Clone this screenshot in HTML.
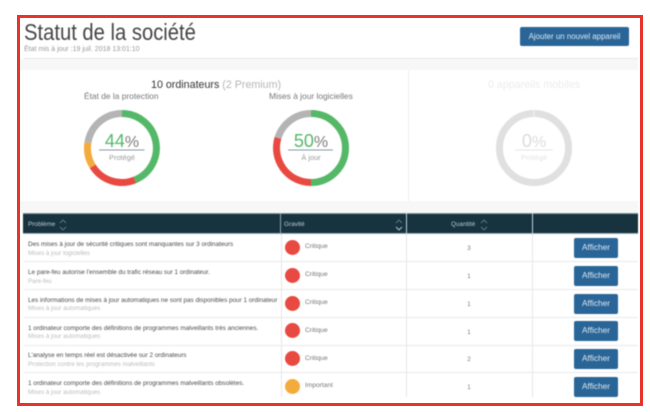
<!DOCTYPE html>
<html lang="fr">
<head>
<meta charset="utf-8">
<title>Statut de la société</title>
<style>
html,body{margin:0;padding:0;background:#fff;}
body{width:650px;height:412px;overflow:hidden;position:relative;font-family:"Liberation Sans",sans-serif;}
#w{position:absolute;left:0;top:0;width:650px;height:412px;filter:blur(0.5px);overflow:hidden;}
.a{position:absolute;white-space:nowrap;}
.band{position:absolute;background:#f7f7f7;}
.btn{position:absolute;left:574px;width:44px;height:20px;background:#2a6597;border-radius:2px;color:#dbe8f2;font-size:8.3px;line-height:19px;text-align:center;}
.sep{position:absolute;left:24px;width:614px;height:1px;background:#e9e9e9;}
.v{position:absolute;width:1px;top:234px;height:163px;background:#e6e6e6;}
.t1{position:absolute;left:28px;font-size:6.35px;color:#4a4a4a;white-space:nowrap;line-height:8px;}
.t2{position:absolute;left:28px;font-size:6.2px;color:#bcbcbc;white-space:nowrap;line-height:8px;}
.dot{position:absolute;left:285px;width:15px;height:15px;border-radius:50%;background:#e84a41;}
.g{position:absolute;left:305px;font-size:6.6px;color:#777;line-height:8px;}
.q{position:absolute;left:464px;width:10px;text-align:center;font-size:6.2px;color:#777;line-height:8px;}
.th{position:absolute;top:221px;font-size:6.4px;color:#b9c8cc;line-height:8px;white-space:nowrap;}
.c{position:absolute;text-align:center;}
</style>
</head>
<body>
<div id="w">
<div class="a" style="left:24px;top:19px;font-size:23.5px;line-height:27px;color:#454545;transform:scaleX(0.86);transform-origin:left top;">Statut de la société</div>
<div class="a" style="left:24px;top:46px;font-size:7px;line-height:8px;color:#999;">État mis à jour :19 juil. 2018 13:01:10</div>
<div class="a" style="left:520px;top:27px;width:109px;height:19px;background:#2a6597;border-radius:2px;color:#dbe8f2;font-size:7.9px;line-height:19px;text-align:center;">Ajouter un nouvel appareil</div>

<div class="band" style="left:20px;top:59px;width:618px;height:11px;"></div>
<div class="a" style="left:24px;top:58px;width:614px;height:1px;background:#e6e6e6;"></div>
<div class="band" style="left:20px;top:201px;width:618px;height:12px;"></div>
<div class="a" style="left:408px;top:70px;width:1px;height:131px;background:#eeeeee;"></div>

<div class="a" style="left:151px;top:79px;font-size:10.7px;line-height:12px;color:#333;">10 ordinateurs <span style="color:#b5b5b5;">(2 Premium)</span></div>
<div class="a" style="left:84px;top:91px;font-size:8.4px;line-height:11px;color:#777;">État de la protection</div>
<div class="a" style="left:269px;top:91px;font-size:8.4px;line-height:11px;color:#777;">Mises à jour logicielles</div>
<div class="a" style="left:488px;top:79px;font-size:10.7px;line-height:12px;color:#ececec;">0 appareils mobiles</div>

<svg class="a" style="left:0;top:0;" width="650" height="412" viewBox="0 0 650 412" fill="none">
  <g stroke-width="7">
    <path d="M122 113.5 A34.5 34.5 0 0 1 134.8 180" stroke="#54b868"/>
    <path d="M134.8 180 A34.5 34.5 0 0 1 92.7 166.3" stroke="#e84a41"/>
    <path d="M92.7 166.3 A34.5 34.5 0 0 1 87.9 142.6" stroke="#f3ab3c"/>
    <path d="M87.9 142.6 A34.5 34.5 0 0 1 122 113.5" stroke="#b4b4b4"/>
    <path d="M311 113.5 A34.5 34.5 0 0 1 311 182.5" stroke="#54b868"/>
    <path d="M311 182.5 A34.5 34.5 0 0 1 278 137.9" stroke="#e84a41"/>
    <path d="M278 137.9 A34.5 34.5 0 0 1 311 113.5" stroke="#b4b4b4"/>
    <circle cx="534" cy="148" r="34.5" stroke="#e0e0e0"/>
  </g>
  <path d="M534 110 V117" stroke="#fff" stroke-width="0.6"/>
  <path d="M99 150 H144.500" stroke="#8a9aa3" stroke-width="1"/>
  <path d="M288 150 H333" stroke="#8a9aa3" stroke-width="1"/>
  <path d="M515 150 H553" stroke="#dcdcdc" stroke-width="0.8"/>
</svg>

<div class="c" style="left:82px;width:80px;top:131px;font-size:18px;line-height:20px;color:#54b868;">44<span style="color:#7d7d7d;font-size:16px;">%</span></div>
<div class="c" style="left:82px;width:80px;top:153px;font-size:7.4px;line-height:10px;color:#9a9a9a;">Protégé</div>
<div class="c" style="left:271px;width:80px;top:131px;font-size:18px;line-height:20px;color:#54b868;">50<span style="color:#7d7d7d;font-size:16px;">%</span></div>
<div class="c" style="left:271px;width:80px;top:153px;font-size:7.4px;line-height:10px;color:#9a9a9a;">À jour</div>
<div class="c" style="left:494px;width:80px;top:131px;font-size:18px;line-height:20px;color:#dcdcdc;">0<span style="font-size:16px;">%</span></div>
<div class="c" style="left:494px;width:80px;top:153px;font-size:7.4px;line-height:10px;color:#e4e4e4;">Protégé</div>

<div class="a" style="left:23px;top:213px;width:615px;height:21px;background:#173340;border-top:1px solid #7f969e;border-bottom:1px solid #9fb0b6;box-sizing:border-box;"></div>
<div class="a" style="left:280px;top:213px;width:1px;height:21px;background:#8fa3aa;"></div>
<div class="a" style="left:406px;top:213px;width:1px;height:21px;background:#c3ced2;"></div>
<div class="a" style="left:532px;top:213px;width:1px;height:21px;background:#c3ced2;"></div>
<div class="th" style="left:28px;">Problème</div>
<div class="th" style="left:284px;">Gravité</div>
<div class="th" style="left:451px;">Quantité</div>
<svg class="a" style="left:0;top:0;" width="650" height="412" viewBox="0 0 650 412" fill="none" stroke-width="0.9">
  <path d="M60 223 L63 220 L66 223 M60 227 L63 230 L66 227" stroke="#5f7a85"/>
  <path d="M396 223 L399 220 L402 223" stroke="#5f7a85"/>
  <path d="M396 227 L399 230 L402 227" stroke="#c3ced2"/>
  <path d="M481 223 L484 220 L487 223 M481 227 L484 230 L487 227" stroke="#5f7a85"/>
</svg>

<div class="sep" style="top:261px;"></div>
<div class="sep" style="top:289px;"></div>
<div class="sep" style="top:317px;"></div>
<div class="sep" style="top:345px;"></div>
<div class="sep" style="top:372px;"></div>
<div class="v" style="left:281px;"></div>
<div class="v" style="left:406px;"></div>
<div class="v" style="left:532px;"></div>

<div class="t1" style="top:241px;">Des mises à jour de sécurité critiques sont manquantes sur 3 ordinateurs</div>
<div class="t2" style="top:250px;">Mises à jour logicielles</div>
<div class="t1" style="top:269px;">Le pare-feu autorise l'ensemble du trafic réseau sur 1 ordinateur.</div>
<div class="t2" style="top:278px;">Pare-feu</div>
<div class="t1" style="top:297px;">Les informations de mises à jour automatiques ne sont pas disponibles pour 1 ordinateur</div>
<div class="t2" style="top:305px;">Mises à jour automatiques</div>
<div class="t1" style="top:325px;">1 ordinateur comporte des définitions de programmes malveillants très anciennes.</div>
<div class="t2" style="top:333px;">Mises à jour automatiques</div>
<div class="t1" style="top:352px;">L'analyse en temps réel est désactivée sur 2 ordinateurs</div>
<div class="t2" style="top:361px;">Protection contre les programmes malveillants</div>
<div class="t1" style="top:380px;">1 ordinateur comporte des définitions de programmes malveillants obsolètes.</div>
<div class="t2" style="top:389px;">Mises à jour automatiques</div>

<div class="dot" style="top:240px;"></div><div class="g" style="top:243px;">Critique</div>
<div class="dot" style="top:268px;"></div><div class="g" style="top:271px;">Critique</div>
<div class="dot" style="top:296px;"></div><div class="g" style="top:299px;">Critique</div>
<div class="dot" style="top:323px;"></div><div class="g" style="top:327px;">Critique</div>
<div class="dot" style="top:351px;"></div><div class="g" style="top:355px;">Critique</div>
<div class="dot" style="top:379px;background:#f3ab3c;"></div><div class="g" style="top:382px;">Important</div>

<div class="q" style="top:245px;">3</div>
<div class="q" style="top:273px;">1</div>
<div class="q" style="top:301px;">1</div>
<div class="q" style="top:329px;">1</div>
<div class="q" style="top:356px;">2</div>
<div class="q" style="top:384px;">1</div>

<div class="btn" style="top:238px;">Afficher</div>
<div class="btn" style="top:266px;">Afficher</div>
<div class="btn" style="top:294px;">Afficher</div>
<div class="btn" style="top:321px;">Afficher</div>
<div class="btn" style="top:349px;">Afficher</div>
<div class="btn" style="top:377px;">Afficher</div>
</div>
<div class="a" style="left:17px;top:15px;width:626px;height:391px;border:3px solid #e8332a;box-sizing:border-box;"></div>
</body>
</html>
